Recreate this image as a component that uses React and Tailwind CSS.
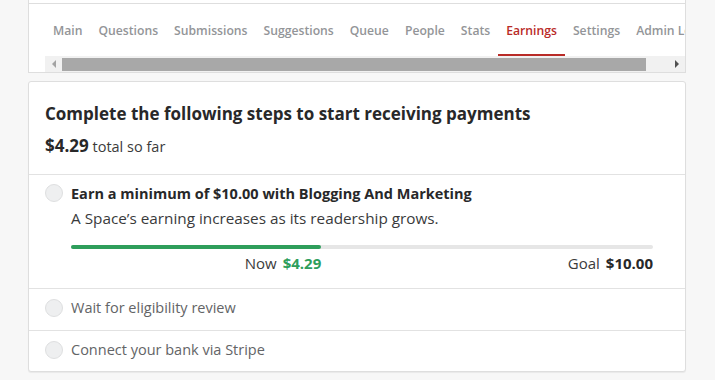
import React from 'react';

const tabs = ['Main', 'Questions', 'Submissions', 'Suggestions', 'Queue', 'People', 'Stats', 'Earnings', 'Settings', 'Admin Log'];

function Circle() {
  return <div className="w-[18px] h-[18px] shrink-0 rounded-full bg-[#eeeff0] border border-[#dedfe0]" />;
}

export default function App() {
  return (
    <div className="min-h-screen bg-[#f7f7f7] pl-[28px] w-[715px] overflow-hidden" style={{ fontFamily: '"Open Sans", "Noto Sans", sans-serif' }}>
      {/* tab card */}
      <div className="w-[658px] bg-white border-x border-b border-[#dedede]">
        <div className="h-[4px] border-b border-[#dedede]" />
        <div className="pl-4 overflow-hidden">
          <div className="flex whitespace-nowrap h-[52px]">
            {tabs.map(t => (
              <div key={t}
                className={`px-2 pt-[18px] text-[12.2px] font-semibold border-b-2 ${t === 'Earnings' ? 'text-[#b92b27] border-[#b92b27]' : 'text-[#939598] border-transparent'}`}>
                {t}
              </div>
            ))}
          </div>
          {/* fake scrollbar */}
          <div className="flex items-center h-[16px] bg-[#f1f1f1]">
            <div className="w-[17px] flex items-center justify-center">
              <div className="w-0 h-0 border-y-[4px] border-y-transparent border-r-[4px] border-r-[#a3a3a3]" />
            </div>
            <div className="w-[584px] h-[13px] bg-[#a8a8a8]" />
            <div className="flex-1 flex items-center justify-end pr-[6px]">
              <div className="w-0 h-0 border-y-[4px] border-y-transparent border-l-[4px] border-l-[#505050]" />
            </div>
          </div>
        </div>
      </div>

      {/* earnings card */}
      <div className="w-[658px] mt-[8px] bg-white border border-[#dedede] rounded-[3px] shadow-[0_1px_1px_rgba(0,0,0,0.06)] text-[#282829]">
        <div className="px-4 pt-[20px] pb-[15px] border-b border-[#e2e2e2]">
          <div className="text-[17px] font-bold leading-[24px]">Complete the following steps to start receiving payments</div>
          <div className="mt-[8px] leading-[24px]">
            <span className="text-[17px] font-bold">$4.29</span>
            <span className="text-[14.5px] text-[#3b3b3b]"> total so far</span>
          </div>
        </div>

        <div className="pl-4 pr-[32px] pt-[9px] pb-[15px] border-b border-[#e2e2e2] flex gap-2">
          <Circle />
          <div className="flex-1">
            <div className="text-[14.5px] font-bold leading-[20px]">Earn a minimum of $10.00 with Blogging And Marketing</div>
            <div className="text-[15.3px] leading-[20px] mt-[4px] text-[#393a3b]">A Space’s earning increases as its readership grows.</div>
            <div className="mt-[17px] h-[4px] rounded-full bg-[#e6e6e6]">
              <div className="h-full rounded-full bg-[#2e9e5b]" style={{ width: `${(4.29 / 10) * 100}%` }} />
            </div>
            <div className="flex text-[15px] leading-[20px] mt-[4px]">
              <div className="w-[43%] text-right">
                <span className="text-[#3b3b3b]">Now</span>
                <span className="ml-[6px] font-bold text-[#2e9e5b]">$4.29</span>
              </div>
              <div className="flex-1 text-right">
                <span className="text-[#3b3b3b]">Goal</span>
                <span className="ml-[6px] font-bold">$10.00</span>
              </div>
            </div>
          </div>
        </div>

        <div className="px-4 pt-[10px] h-[42px] border-b border-[#e2e2e2] flex items-start gap-2">
          <Circle />
          <div className="text-[14.5px] leading-[18px] text-[#636466]">Wait for eligibility review</div>
        </div>
        <div className="px-4 pt-[10px] h-[40px] flex items-start gap-2">
          <Circle />
          <div className="text-[14.5px] leading-[18px] text-[#636466]">Connect your bank via Stripe</div>
        </div>
      </div>
    </div>
  );
}
